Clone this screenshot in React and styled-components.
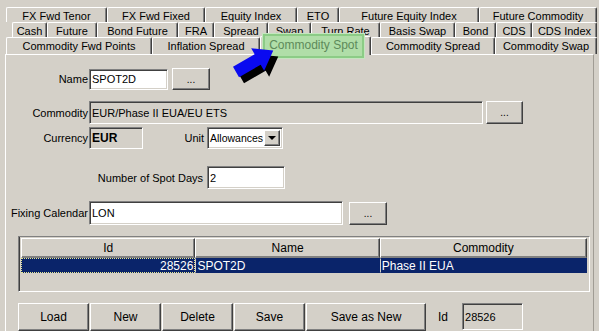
import React from 'react';
import styled, { createGlobalStyle, css } from 'styled-components';

const GlobalStyle = createGlobalStyle`
	body {
		margin: 0;
		background: #d4d0c8;
		font-family: "Liberation Sans", Arial, sans-serif;
		font-size: 11px;
		color: #000;
	}
`;

const raised = css`
	box-sizing: border-box;
	background: #d4d0c8;
	border-top: 1px solid #fff;
	border-left: 1px solid #fff;
	border-right: 1px solid #404040;
	border-bottom: 1px solid #404040;
	box-shadow: inset -1px -1px 0 #808080;
`;

const sunken = css`
	box-sizing: border-box;
	border-top: 1px solid #808080;
	border-left: 1px solid #808080;
	border-right: 1px solid #fff;
	border-bottom: 1px solid #fff;
	box-shadow: inset 1px 1px 0 #404040, inset -1px -1px 0 #d4d0c8;
`;

const Page = styled.div`
	position: relative;
	width: 599px;
	height: 331px;
	overflow: hidden;
	background: #d4d0c8;
`;

const TabStrip = styled.div`
	padding-top: 7px;
`;

const TabRow = styled.div`
	display: flex;
	padding-left: ${(p) => p.$indent}px;
	height: ${(p) => p.$h}px;
`;

const Tab = styled.div`
	box-sizing: border-box;
	flex-shrink: 0;
	width: ${(p) => p.$w}px;
	display: flex;
	align-items: center;
	justify-content: center;
	padding-top: ${(p) => p.$pt || 0}px;
	white-space: nowrap;
	background: #d4d0c8;
	border-left: 1px solid #fff;
	border-top: 1px solid #fff;
	border-right: 1px solid #404040;
	box-shadow: inset -1px 0 0 #808080;
	border-radius: 2px 2px 0 0;

	${(p) =>
		p.$active &&
		css`
			position: relative;
			z-index: 2;
			margin-top: -1px;
			height: calc(100% + 2px);
		`}
`;

const Panel = styled.div`
	box-sizing: border-box;
	margin-left: 5px;
	width: 589px;
	height: 290px;
	border-left: 1px solid #fff;
	border-top: 1px solid #fff;
	border-right: 1px solid #a09c94;
`;

const FormRow = styled.div`
	display: flex;
	align-items: center;
	height: ${(p) => p.$h}px;
	margin-top: ${(p) => p.$mt}px;
`;

const Label = styled.span`
	box-sizing: border-box;
	flex-shrink: 0;
	width: ${(p) => p.$w}px;
	padding-right: ${(p) => p.$pr ?? 1}px;
	text-align: right;
	white-space: nowrap;
`;

const Field = styled.div`
	${sunken};
	flex-shrink: 0;
	display: flex;
	align-items: center;
	width: ${(p) => p.$w}px;
	height: ${(p) => p.$h}px;
	padding-left: 2px;
	background: ${(p) => (p.$disabled ? '#d4d0c8' : '#fff')};
	font-weight: ${(p) => (p.$bold ? 'bold' : 'normal')};
	font-size: ${(p) => (p.$bold ? '12px' : '11px')};
	white-space: nowrap;
	overflow: hidden;
`;

const Select = styled.div`
	${sunken};
	flex-shrink: 0;
	display: flex;
	align-items: center;
	width: ${(p) => p.$w}px;
	height: ${(p) => p.$h}px;
	padding: 2px 2px 2px 1px;
	background: #fff;
	font-size: 10.5px;
`;

const SelectText = styled.span`
	flex: 1;
	min-width: 0;
	overflow: hidden;
	white-space: nowrap;
	padding-left: 1px;
`;

const DropButton = styled.span`
	${raised};
	flex-shrink: 0;
	display: flex;
	align-items: center;
	justify-content: center;
	width: 16px;
	height: 100%;

	&::after {
		content: '';
		border-left: 4px solid transparent;
		border-right: 4px solid transparent;
		border-top: 4px solid #000;
	}
`;

const Button = styled.button`
	${raised};
	flex-shrink: 0;
	width: ${(p) => p.$w}px;
	height: ${(p) => p.$h}px;
	margin-left: ${(p) => p.$ml || 0}px;
	padding: 0;
	font-family: inherit;
	font-size: ${(p) => (p.$small ? '10px' : '12px')};
	color: #000;
	cursor: default;
`;

const TableBox = styled.div`
	${sunken};
	margin: 11px 0 0 12px;
	width: 572px;
	height: 56px;
	padding: 1px 2px;
	background: #d4d0c8;
	box-shadow: inset 1px 0 0 #404040, inset -1px -1px 0 #d4d0c8;
`;

const TableHead = styled.div`
	display: flex;
`;

const HeadCell = styled.div`
	${raised};
	border-bottom-color: #808080;
	width: ${(p) => p.$w}px;
	height: 20px;
	display: flex;
	align-items: center;
	justify-content: center;
	font-size: 12px;
`;

const TableRow = styled.div`
	display: flex;
	height: 15px;
	background: #0a246a;
	color: #fff;
`;

const Cell = styled.div`
	box-sizing: border-box;
	width: ${(p) => p.$w}px;
	display: flex;
	align-items: center;
	justify-content: ${(p) => (p.$right ? 'flex-end' : 'flex-start')};
	padding: 0 1px;
	font-size: 12px;
	border: 1px ${(p) => (p.$focus ? 'dotted #e8e890' : 'solid transparent')};
	border-left: ${(p) => (p.$focus ? '1px dotted #e8e890' : '1px solid #d4d0c8')};
`;

const ButtonBar = styled.div`
	display: flex;
	align-items: flex-start;
	gap: 1px;
	margin: 11px 0 0 12px;
`;

const BarLabel = styled.span`
	margin: 7px 13px 0 11px;
	font-size: 12px;
`;

const Highlight = styled.div`
	position: absolute;
	z-index: 3;
	left: 263px;
	top: 34px;
	width: 101px;
	height: 24px;
	box-sizing: border-box;
	display: flex;
	align-items: center;
	justify-content: center;
	padding-bottom: 3px;
	background: #b0dea8;
	border: 2px solid #8ccc86;
	box-shadow: 0 0 0 1px #c4e6be;
	color: #5d8a5a;
	font-size: 12px;
	white-space: nowrap;
`;

const Arrow = styled.svg`
	position: absolute;
	z-index: 4;
	left: 220px;
	top: 35px;
	width: 65px;
	height: 55px;
`;

const rows = [
	[
		['FX Fwd Tenor', 101],
		['FX Fwd Fixed', 98],
		['Equity Index', 92],
		['ETO', 42],
		['Future Equity Index', 140],
		['Future Commodity', 118],
	],
	[
		['Cash', 35],
		['Future', 50],
		['Bond Future', 81],
		['FRA', 36],
		['Spread', 54],
		['Swap', 43],
		['Turn Rate', 69],
		['Basis Swap', 75],
		['Bond', 41],
		['CDS', 36],
		['CDS Index', 65],
	],
	[
		['Commodity Fwd Points', 146],
		['Inflation Spread', 108],
		['Commodity Spot', 111, true],
		['Commodity Spread', 124],
		['Commodity Swap', 102],
	],
];

const arrowShape = '0,-6 25,-6 25,-13 43,0 25,13 25,6 0,6';

export default function App() {
	return (
		<Page>
			<GlobalStyle />
			<TabStrip>
				<TabRow $indent={6} $h={15}>
					{rows[0].map(([label, w]) => (
						<Tab key={label} $w={w} $pt={2}>
							{label}
						</Tab>
					))}
				</TabRow>
				<TabRow $indent={12} $h={15}>
					{rows[1].map(([label, w]) => (
						<Tab key={label} $w={w} $pt={1}>
							{label}
						</Tab>
					))}
				</TabRow>
				<TabRow $indent={6} $h={17}>
					{rows[2].map(([label, w, active]) => (
						<Tab key={label} $w={w} $active={active}>
							{active ? '' : label}
						</Tab>
					))}
				</TabRow>
			</TabStrip>

			<Panel>
				<FormRow $h={22} $mt={13}>
					<Label $w={83}>Name</Label>
					<Field $w={79} $h={21}>SPOT2D</Field>
					<Button $w={38} $h={22} $ml={4} $small>
						...
					</Button>
				</FormRow>

				<FormRow $h={23} $mt={11}>
					<Label $w={83}>Commodity</Label>
					<Field $w={394} $h={23} $disabled>
						EUR/Phase II EUA/EU ETS
					</Field>
					<Button $w={37} $h={23} $ml={3} $small>
						...
					</Button>
				</FormRow>

				<FormRow $h={23} $mt={2}>
					<Label $w={83}>Currency</Label>
					<Field $w={54} $h={22} $disabled $bold>
						EUR
					</Field>
					<Label $w={64} $pr={3}>
						Unit
					</Label>
					<Select $w={76} $h={22}>
						<SelectText>Allowances</SelectText>
						<DropButton />
					</Select>
				</FormRow>

				<FormRow $h={23} $mt={17}>
					<Label $w={201} $pr={4}>
						Number of Spot Days
					</Label>
					<Field $w={78} $h={23}>2</Field>
				</FormRow>

				<FormRow $h={24} $mt={12}>
					<Label $w={83}>Fixing Calendar</Label>
					<Field $w={254} $h={24}>LON</Field>
					<Button $w={38} $h={23} $ml={6} $small>
						...
					</Button>
				</FormRow>

				<TableBox>
					<TableHead>
						<HeadCell $w={175}>Id</HeadCell>
						<HeadCell $w={185}>Name</HeadCell>
						<HeadCell $w={208}>Commodity</HeadCell>
					</TableHead>
					<TableRow>
						<Cell $w={175} $right $focus>
							28526
						</Cell>
						<Cell $w={185}>SPOT2D</Cell>
						<Cell $w={208}>Phase II EUA</Cell>
					</TableRow>
				</TableBox>

				<ButtonBar>
					<Button $w={71} $h={28}>Load</Button>
					<Button $w={71} $h={28}>New</Button>
					<Button $w={71} $h={28}>Delete</Button>
					<Button $w={71} $h={28}>Save</Button>
					<Button $w={120} $h={28}>Save as New</Button>
					<BarLabel>Id</BarLabel>
					<Field $w={61} $h={27} $disabled>
						28526
					</Field>
				</ButtonBar>
			</Panel>

			<Highlight>Commodity Spot</Highlight>

			<Arrow viewBox="220 35 65 55">
				<polygon points={arrowShape} fill="#000" transform="translate(241,78) rotate(-30)" />
				<polygon points={arrowShape} fill="#0a0af0" transform="translate(236,72) rotate(-30)" />
			</Arrow>
		</Page>
	);
}
